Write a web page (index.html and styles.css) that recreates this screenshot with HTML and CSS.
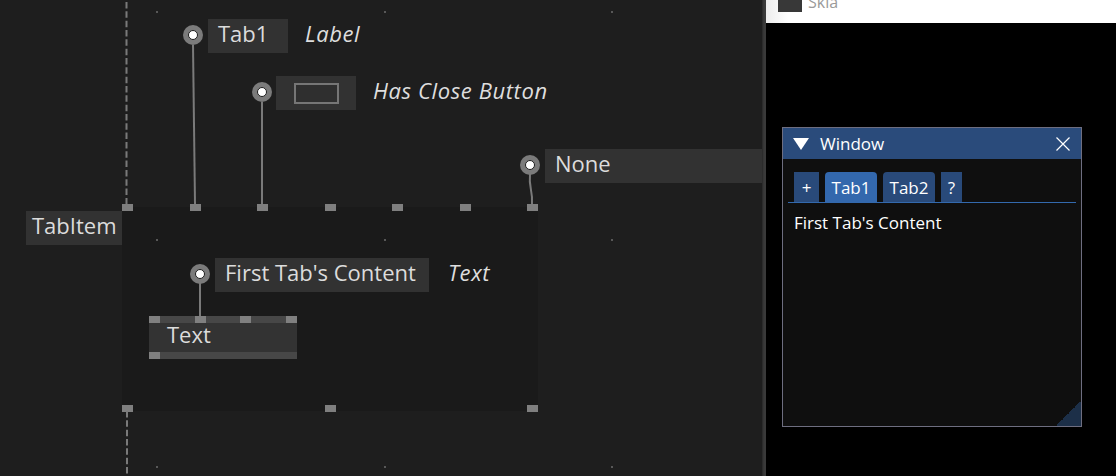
FILE: index.html
```html
<!DOCTYPE html>
<html>
<head>
<meta charset="utf-8">
<link rel="stylesheet" href="styles.css">
</head>
<body>
<div class="screen">
  <div class="canvas">
    <div class="node">
      <div class="ports ports-top"><i></i><i></i><i></i><i></i><i></i><i></i><i></i></div>
      <div class="ports ports-bottom"><i></i><i></i><i></i></div>
    </div>
    <div class="dots"><i></i><i></i><i></i><i></i><i></i><i></i><i></i><i></i><i></i></div>
    <svg class="wires" width="762" height="476" viewBox="0 0 762 476">
      <line class="dash" x1="126.5" y1="2" x2="126.5" y2="204"/>
      <line class="dash" x1="127" y1="411" x2="127" y2="476"/>
      <path d="M193 45 L195 204"/>
      <path d="M262 102 L262 204"/>
      <path d="M530 174 C528.5 188 533 190 532 204"/>
      <path d="M200 283 L200 316"/>
    </svg>

    <div class="node-title">TabItem</div>

    <div class="prop prop-label">
      <span class="pin"></span>
      <span class="field field-tab1">Tab1</span>
      <em class="prop-name">Label</em>
    </div>

    <div class="prop prop-close">
      <span class="pin"></span>
      <span class="field field-check"><span class="checkbox"></span></span>
      <em class="prop-name">Has Close Button</em>
    </div>

    <div class="prop prop-none">
      <span class="pin"></span>
      <span class="field field-none">None</span>
    </div>

    <div class="prop prop-text">
      <span class="pin"></span>
      <span class="field field-content">First Tab's Content</span>
      <em class="prop-name prop-name-text">Text</em>
    </div>

    <div class="text-node">
      <div class="strip strip-top"><i class="p-light"></i><i></i><i class="p-light"></i><i></i><i class="p-light"></i><i></i><i class="p-light"></i></div>
      <div class="text-node-body">Text</div>
      <div class="strip strip-bottom"><i class="p-light"></i></div>
    </div>
  </div>

  <div class="divider"></div>

  <div class="viewer">
    <div class="app-bar">
      <span class="app-icon"></span>
      <span class="app-name">Skia</span>
    </div>

    <div class="window">
      <div class="win-title">
        <svg class="collapse" width="16" height="12" viewBox="0 0 16 12"><polygon points="0,0 16,0 8,12" fill="#ffffff"/></svg>
        <span class="win-title-text">Window</span>
        <svg class="win-close" width="14" height="14" viewBox="0 0 14 14"><path d="M0.5 0.5 L13.5 13.5 M13.5 0.5 L0.5 13.5" stroke="#ffffff" stroke-width="1.2" fill="none"/></svg>
      </div>
      <div class="win-body">
        <div class="tabs">
          <span class="tab tab-btn tab-plus">+</span>
          <span class="tab tab-item tab-active">Tab1</span>
          <span class="tab tab-item">Tab2</span>
          <span class="tab tab-btn tab-help">?</span>
        </div>
        <div class="win-content">First Tab's Content</div>
      </div>
      <div class="grip"></div>
    </div>
  </div>
</div>
</body>
</html>
```

FILE: styles.css
```css
html, body {
  margin: 0;
  padding: 0;
  background: #000;
  overflow: hidden;
}

.screen {
  width: 1116px;
  height: 476px;
  display: flex;
  font-family: "Open Sans", "DejaVu Sans", sans-serif;
}

/* ---------- node canvas ---------- */
.canvas {
  width: 762px;
  height: 476px;
  position: relative;
  overflow: hidden;
  background: #1e1e1e;
  flex: none;
}

.node {
  position: absolute;
  left: 122px;
  top: 207px;
  width: 416px;
  height: 204px;
  background: #1a1a1a;
}

.ports {
  position: absolute;
  left: 0;
  right: 0;
  display: flex;
  justify-content: space-between;
}
.ports-top { top: -3px; }
.ports-bottom { top: 198px; }
.ports i {
  display: block;
  width: 11px;
  height: 7px;
  background: #7f7f7f;
}

.dots {
  position: absolute;
  left: 156px;
  top: 11px;
  display: grid;
  grid-template-columns: repeat(3, 2px);
  grid-auto-rows: 2px;
  column-gap: 225.5px;
  row-gap: 225.5px;
}
.dots i {
  display: block;
  width: 2px;
  height: 2px;
  background: #585858;
}

.wires {
  position: absolute;
  left: 0;
  top: 0;
}
.wires path,
.wires line {
  stroke: #7a7a7a;
  stroke-width: 2;
  fill: none;
}
.wires .dash {
  stroke-dasharray: 6.5 2.83;
}

.node-title {
  position: absolute;
  left: 26px;
  top: 211px;
  width: 96px;
  height: 34px;
  box-sizing: border-box;
  padding-left: 6px;
  background: #323232;
  color: #dcdcdc;
  font-size: 22px;
  line-height: 29px;
  white-space: nowrap;
}

.prop {
  position: absolute;
  display: flex;
  align-items: flex-start;
  white-space: nowrap;
}
.prop-label { left: 183px; top: 19px; }
.prop-close { left: 252px; top: 76px; }
.prop-none { left: 520px; top: 149px; }
.prop-text { left: 190px; top: 258px; }

.pin {
  flex: none;
  width: 20px;
  height: 20px;
  margin-top: 6px;
  border-radius: 50%;
  background: #7b7b7b;
  display: flex;
  align-items: center;
  justify-content: center;
}
.pin::after {
  content: "";
  width: 8px;
  height: 8px;
  border-radius: 50%;
  background: #ffffff;
  border: 1px solid #1e1e1e;
}

.field {
  margin-left: 5px;
  height: 34px;
  box-sizing: border-box;
  padding-left: 10px;
  background: #323232;
  color: #dcdcdc;
  font-size: 22px;
  line-height: 29px;
}
.prop-close .field { margin-left: 4px; }
.field-tab1 { width: 80px; }
.field-check {
  width: 80px;
  padding-left: 0;
  display: flex;
  align-items: center;
  justify-content: center;
}
.checkbox {
  width: 45px;
  height: 21px;
  box-sizing: border-box;
  border: 2px solid #767676;
  background: #2f2f2f;
}
.field-none { width: 240px; }
.field-content { width: 214px; }

.prop-name {
  margin-left: 17px;
  height: 34px;
  color: #dedede;
  font-size: 22px;
  font-style: italic;
  line-height: 28px;
  letter-spacing: 0.6px;
}
.prop-name-text { margin-left: 19px; }

.text-node {
  position: absolute;
  left: 149px;
  top: 316px;
  width: 148px;
  display: flex;
  flex-direction: column;
}
.strip {
  height: 7px;
  background: #474747;
  display: flex;
  justify-content: space-between;
}
.strip i {
  display: block;
  width: 11px;
  height: 7px;
}
.strip i.p-light { background: #808080; }
.strip-top i:nth-child(2),
.strip-top i:nth-child(4),
.strip-top i:nth-child(6) { width: 34px; }
.text-node-body {
  height: 29px;
  background: #333333;
  color: #dcdcdc;
  font-size: 22px;
  line-height: 23px;
  padding-left: 18px;
}

/* ---------- divider ---------- */
.divider {
  width: 4px;
  height: 476px;
  flex: none;
  background: #363636;
  box-shadow: inset 1px 0 #2c2c2c, inset -2px 0 #3a3a3a;
}

/* ---------- viewer ---------- */
.viewer {
  flex: 1;
  height: 476px;
  background: #000;
  display: flex;
  flex-direction: column;
  align-items: flex-start;
}

.app-bar {
  align-self: stretch;
  height: 23px;
  background: linear-gradient(to right, #ececec 0, #ffffff 22px);
  display: flex;
  align-items: flex-start;
  padding-left: 12px;
  gap: 6px;
  overflow: hidden;
  flex: none;
}
.app-icon {
  width: 24px;
  height: 12px;
  background: #383838;
}
.app-name {
  font-size: 16px;
  line-height: 20px;
  margin-top: -8px;
  color: #9a9a9a;
}

.window {
  margin: 104px 0 0 16px;
  width: 300px;
  height: 300px;
  box-sizing: border-box;
  border: 1px solid #6e6e80;
  background: #0f0f0f;
  position: relative;
  display: flex;
  flex-direction: column;
  flex: none;
}

.win-title {
  height: 31px;
  background: #2a4b7b;
  display: flex;
  align-items: center;
  padding: 0 11px 0 10px;
  flex: none;
}
.collapse {
  flex: none;
}
.win-title-text {
  margin-left: 11px;
  flex: 1;
  color: #ffffff;
  font-size: 17px;
  line-height: 23px;
  margin-top: 0;
}
.win-close { flex: none; }

.win-body {
  padding: 13px 5px 0 5px;
}
.tabs {
  display: flex;
  gap: 6px;
  padding-left: 6px;
  height: 30px;
  border-bottom: 1px solid #3369ad;
}
.tab {
  height: 30px;
  box-sizing: border-box;
  padding-top: 4px;
  text-align: center;
  color: #ffffff;
  font-size: 17px;
  line-height: 23px;
  background: #294a7a;
}
.tab-item {
  width: 52px;
  border-radius: 4px 4px 0 0;
}
.tab-plus { width: 25px; }
.tab-help { width: 21px; }
.tab-active { background: #3368ad; }

.win-content {
  margin-top: 8px;
  padding-left: 6px;
  color: #ffffff;
  font-size: 17px;
  line-height: 23px;
}

.grip {
  position: absolute;
  right: 0;
  bottom: 0;
  width: 25px;
  height: 25px;
  background: linear-gradient(to top left, #1c2f48 50%, transparent 50%);
}
```
